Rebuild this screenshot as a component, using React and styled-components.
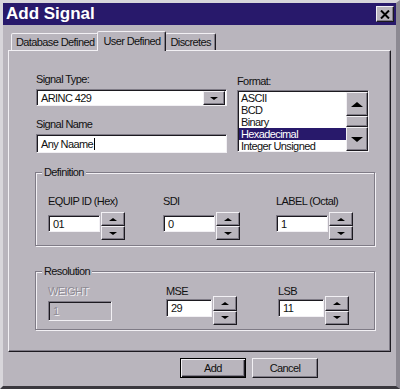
import React from 'react'
import styled, { createGlobalStyle, css } from 'styled-components'

const FACE = '#b9b5bd'
const LIGHT = '#f2f0f4'
const SHADOW = '#7f7b86'
const DARK = '#1c1a20'
const NAVY = '#28196b'

const GlobalStyle = createGlobalStyle`
  html, body {
    margin: 0;
    padding: 0;
    background: ${FACE};
  }
  body {
    font-family: 'Liberation Sans', Arial, sans-serif;
    font-size: 11px;
    letter-spacing: -0.6px;
    color: #111;
  }
  * {
    box-sizing: border-box;
  }
`

const raised = css`
  background: ${FACE};
  border: 1px solid;
  border-color: ${LIGHT} ${DARK} ${DARK} ${LIGHT};
  box-shadow: inset -1px -1px 0 ${SHADOW};
`

const sunken = css`
  background: #fff;
  border: 1px solid;
  border-color: ${SHADOW} ${LIGHT} ${LIGHT} ${SHADOW};
  box-shadow: inset 1px 1px 0 ${DARK};
`

const Arrow = styled.span`
  width: 0;
  height: 0;
  border-left: ${(p) => p.$size}px solid transparent;
  border-right: ${(p) => p.$size}px solid transparent;
  ${(p) =>
    p.$up
      ? css`border-bottom: ${Math.ceil(p.$size / 1.4)}px solid #000;`
      : css`border-top: ${Math.ceil(p.$size / 1.4)}px solid #000;`}
`

const Window = styled.div`
  width: 400px;
  height: 389px;
  display: flex;
  flex-direction: column;
  background: ${FACE};
  border-style: solid;
  border-width: 3px 4px 3px 3px;
  border-color: #d8d6db #8c8992 #3a383e #d8d6db;
`

const TitleBar = styled.div`
  height: 22px;
  flex: none;
  display: flex;
  align-items: center;
  justify-content: space-between;
  background: ${NAVY};
  padding: 0 2px 0 3px;
`

const Title = styled.div`
  color: #fff;
  font-size: 17px;
  font-weight: bold;
  letter-spacing: 0;
  line-height: 22px;
`

const CloseButton = styled.div`
  ${raised};
  width: 18px;
  height: 16px;
  display: flex;
  align-items: center;
  justify-content: center;
`

const Body = styled.div`
  flex: 1;
  display: flex;
  flex-direction: column;
  padding: 6px 5px 0 5px;
`

const TabRow = styled.div`
  height: 19px;
  display: flex;
  align-items: flex-end;
  padding-left: 3px;
`

const Tab = styled.div`
  height: 17px;
  padding: 0 4px;
  display: flex;
  align-items: center;
  background: ${FACE};
  border: 1px solid;
  border-bottom: none;
  border-color: ${LIGHT} ${DARK} transparent ${LIGHT};
  border-radius: 2px 2px 0 0;
  box-shadow: inset -1px 0 0 ${SHADOW};
  ${(p) =>
    p.$active &&
    css`
      height: 20px;
      margin: 0 -1px -1px -2px;
      padding: 0 5px 2px 5px;
      position: relative;
      z-index: 1;
    `}
`

const Panel = styled.div`
  height: 302px;
  display: flex;
  flex-direction: column;
  padding: 22px 0 0 26px;
  border: 1px solid;
  border-color: ${LIGHT} ${DARK} ${DARK} ${LIGHT};
  box-shadow: inset -1px -1px 0 ${SHADOW};
`

const TopRow = styled.div`
  display: flex;
  gap: 10px;
  margin-left: 1px;
`

const Column = styled.div`
  display: flex;
  flex-direction: column;
  width: ${(p) => p.$w}px;
`

const Label = styled.div`
  line-height: ${(p) => p.$lh || 13}px;
  height: ${(p) => p.$lh || 13}px;
  margin-top: ${(p) => p.$mt || 0}px;
  white-space: nowrap;
  ${(p) =>
    p.$disabled &&
    css`
      color: #8d8a93;
      text-shadow: 1px 1px 0 ${LIGHT};
    `}
`

const Combo = styled.div`
  ${sunken};
  margin-top: 3px;
  height: 17px;
  display: flex;
  align-items: center;
  justify-content: space-between;
  padding: 2px 1px 1px 4px;
`

const ComboButton = styled.div`
  ${raised};
  width: 22px;
  height: 14px;
  display: flex;
  align-items: center;
  justify-content: center;
`

const Field = styled.div`
  ${sunken};
  width: ${(p) => (p.$w ? `${p.$w}px` : 'auto')};
  height: ${(p) => p.$h}px;
  margin-top: ${(p) => p.$mt || 0}px;
  padding-left: 4px;
  display: flex;
  align-items: center;
  white-space: nowrap;
  ${(p) =>
    p.$disabled &&
    css`
      background: ${FACE};
      color: #8d8a93;
      text-shadow: 1px 1px 0 ${LIGHT};
    `}
`

const Caret = styled.span`
  display: inline-block;
  width: 1px;
  height: 12px;
  background: #000;
  margin-left: 1px;
`

const ListBox = styled.div`
  ${sunken};
  margin-top: 2px;
  width: 132px;
  height: 62px;
  display: flex;
  padding: 1px 0 0 1px;
`

const Items = styled.div`
  flex: 1;
  display: flex;
  flex-direction: column;
`

const Item = styled.div`
  height: 12px;
  line-height: 12px;
  padding-left: 2px;
  ${(p) =>
    p.$selected &&
    css`
      background: ${NAVY};
      color: #fff;
    `}
`

const ScrollBar = styled.div`
  width: 22px;
  display: flex;
  flex-direction: column;
  background: #d4d1d8;
`

const ScrollButton = styled.div`
  ${raised};
  height: ${(p) => p.$h}px;
  display: flex;
  align-items: center;
  justify-content: center;
`

const Track = styled.div`
  flex: 1;
`

const Group = styled.fieldset`
  width: 340px;
  margin: ${(p) => p.$mt}px 0 0 0;
  padding: 0;
  border: 1px solid ${SHADOW};
  box-shadow: inset 1px 1px 0 ${LIGHT}, 1px 1px 0 ${LIGHT};
`

const Legend = styled.legend`
  margin-left: 6px;
  padding: 0 2px;
  line-height: 13px;
  background: ${FACE};
`

const GroupGrid = styled.div`
  display: grid;
  grid-template-columns: ${(p) => p.$cols};
  padding: ${(p) => p.$pt}px 0 ${(p) => p.$pb}px 12px;
`

const Cell = styled.div`
  display: flex;
  flex-direction: column;
`

const SpinRow = styled.div`
  display: flex;
  align-items: flex-start;
  margin-top: ${(p) => p.$mt || 0}px;
`

const Spinner = styled.div`
  width: 24px;
  height: ${(p) => p.$h}px;
  display: flex;
  flex-direction: column;
  margin-left: 1px;
`

const SpinButton = styled.div`
  ${raised};
  flex: 1;
  display: flex;
  align-items: center;
  justify-content: center;
`

const Footer = styled.div`
  display: flex;
  justify-content: flex-end;
  gap: 6px;
  padding: 6px 73px 0 0;
`

const Button = styled.div`
  width: 66px;
  height: 20px;
  display: flex;
  align-items: center;
  justify-content: center;
  ${raised};
  ${(p) =>
    p.$default &&
    css`
      border: 1px solid #000;
      box-shadow: inset 1px 1px 0 ${LIGHT}, inset -1px -1px 0 ${DARK},
        inset -2px -2px 0 ${SHADOW};
    `}
`

const SpinField = ({ value, w, h, fieldTop, spinH }) => (
  <SpinRow>
    <Field $w={w} $h={h} $mt={fieldTop}>
      {value}
    </Field>
    <Spinner $h={spinH}>
      <SpinButton>
        <Arrow $up $size={4} />
      </SpinButton>
      <SpinButton>
        <Arrow $size={4} />
      </SpinButton>
    </Spinner>
  </SpinRow>
)

const formats = ['ASCII', 'BCD', 'Binary', 'Hexadecimal', 'Integer Unsigned']

const App = () => {
  return (
    <>
      <GlobalStyle />
      <Window>
        <TitleBar>
          <Title>Add Signal</Title>
          <CloseButton>
            <svg width='10' height='9' viewBox='0 0 10 9'>
              <path d='M1 0.5 L9 8.5 M9 0.5 L1 8.5' stroke='#000' strokeWidth='2' />
            </svg>
          </CloseButton>
        </TitleBar>

        <Body>
          <TabRow>
            <Tab>Database Defined</Tab>
            <Tab $active>User Defined</Tab>
            <Tab>Discretes</Tab>
          </TabRow>

          <Panel>
            <TopRow>
              <Column $w={191}>
                <Label>Signal Type:</Label>
                <Combo>
                  ARINC 429
                  <ComboButton>
                    <Arrow $size={4} />
                  </ComboButton>
                </Combo>
                <Label $mt={12}>Signal Name</Label>
                <Field $h={19} $mt={3}>
                  Any Naame
                  <Caret />
                </Field>
              </Column>
              <Column $w={134}>
                <Label $mt={2}>Format:</Label>
                <ListBox>
                  <Items>
                    {formats.map((f) => (
                      <Item key={f} $selected={f === 'Hexadecimal'}>
                        {f}
                      </Item>
                    ))}
                  </Items>
                  <ScrollBar>
                    <ScrollButton $h={24}>
                      <Arrow $up $size={6} />
                    </ScrollButton>
                    <ScrollButton $h={11} />
                    <Track />
                    <ScrollButton $h={24}>
                      <Arrow $size={6} />
                    </ScrollButton>
                  </ScrollBar>
                </ListBox>
              </Column>
            </TopRow>

            <Group $mt={13}>
              <Legend>Definition</Legend>
              <GroupGrid $cols='115px 113px auto' $pt={17} $pb={5}>
                <Cell>
                  <Label $lh={10}>EQUIP ID (Hex)</Label>
                  <SpinRow $mt={6}>
                    <SpinField value='01' w={52} h={17} fieldTop={3} spinH={28} />
                  </SpinRow>
                </Cell>
                <Cell>
                  <Label $lh={10}>SDI</Label>
                  <SpinRow $mt={6}>
                    <SpinField value='0' w={52} h={17} fieldTop={3} spinH={28} />
                  </SpinRow>
                </Cell>
                <Cell>
                  <Label $lh={10}>LABEL (Octal)</Label>
                  <SpinRow $mt={6}>
                    <SpinField value='1' w={52} h={17} fieldTop={3} spinH={28} />
                  </SpinRow>
                </Cell>
              </GroupGrid>
            </Group>

            <Group $mt={19}>
              <Legend>Resolution</Legend>
              <GroupGrid $cols='118px 112px auto' $pt={8} $pb={4}>
                <Cell>
                  <Label $lh={10} $disabled>
                    WEIGHT
                  </Label>
                  <Field $w={64} $h={20} $mt={5} $disabled>
                    1
                  </Field>
                </Cell>
                <Cell>
                  <Label $lh={10}>MSE</Label>
                  <SpinField value='29' w={46} h={18} fieldTop={3} spinH={29} />
                </Cell>
                <Cell>
                  <Label $lh={10}>LSB</Label>
                  <SpinField value='11' w={46} h={18} fieldTop={3} spinH={29} />
                </Cell>
              </GroupGrid>
            </Group>
          </Panel>

          <Footer>
            <Button $default>Add</Button>
            <Button>Cancel</Button>
          </Footer>
        </Body>
      </Window>
    </>
  )
}

export default App
